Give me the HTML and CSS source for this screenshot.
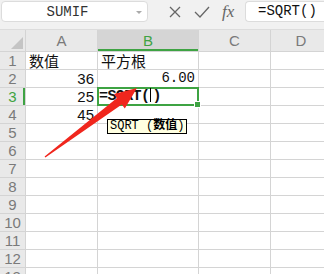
FILE: index.html
```html
<!DOCTYPE html>
<html lang="en">
<head>
    <meta charset="UTF-8">
    <title>SQRT</title>
    <link rel="stylesheet" href="styles.css">
</head>
<body>
    <div class="toolbar">
        <div class="name-box">
            <span class="name-text">SUMIF</span>
            <span class="drop"></span>
        </div>
        <div class="fx-icons">
            <svg width="14" height="14" viewBox="0 0 14 14"><path d="M2 2 L12 12 M12 2 L2 12" stroke="#666" stroke-width="1.3" fill="none"/></svg>
            <svg width="16" height="14" viewBox="0 0 16 14"><path d="M1 7 L6 12 L15 2" stroke="#666" stroke-width="1.3" fill="none"/></svg>
            <span class="fx">fx</span>
        </div>
        <div class="formula">=SQRT()</div>
    </div>

    <div class="sheet">
        <div class="corner"><span class="tri"></span></div>
        <div class="col-head">A</div>
        <div class="col-head active">B</div>
        <div class="col-head">C</div>
        <div class="col-head">D</div>

        <div class="row-head">1</div>
        <div class="cell cjk">数值</div>
        <div class="cell cjk">平方根</div>
        <div class="cell"></div>
        <div class="cell"></div>

        <div class="row-head">2</div>
        <div class="cell num">36</div>
        <div class="cell mono">6.00</div>
        <div class="cell"></div>
        <div class="cell"></div>

        <div class="row-head active">3</div>
        <div class="cell num">25</div>
        <div class="cell editing">=SQRT(<span class="caret"></span>)<span class="handle"></span>
            <div class="tip">SQRT (<b>数值</b>)</div>
        </div>
        <div class="cell"></div>
        <div class="cell"></div>

        <div class="row-head">4</div>
        <div class="cell num">45</div>
        <div class="cell"></div>
        <div class="cell"></div>
        <div class="cell"></div>

        <div class="row-head">5</div><div class="cell"></div><div class="cell"></div><div class="cell"></div><div class="cell"></div>
        <div class="row-head">6</div><div class="cell"></div><div class="cell"></div><div class="cell"></div><div class="cell"></div>
        <div class="row-head">7</div><div class="cell"></div><div class="cell"></div><div class="cell"></div><div class="cell"></div>
        <div class="row-head">8</div><div class="cell"></div><div class="cell"></div><div class="cell"></div><div class="cell"></div>
        <div class="row-head">9</div><div class="cell"></div><div class="cell"></div><div class="cell"></div><div class="cell"></div>
        <div class="row-head">10</div><div class="cell"></div><div class="cell"></div><div class="cell"></div><div class="cell"></div>
        <div class="row-head">11</div><div class="cell"></div><div class="cell"></div><div class="cell"></div><div class="cell"></div>
        <div class="row-head">12</div><div class="cell"></div><div class="cell"></div><div class="cell"></div><div class="cell"></div>
        <div class="row-head">13</div><div class="cell"></div><div class="cell"></div><div class="cell"></div><div class="cell"></div>
    </div>

    <!-- annotation arrow -->
    <svg class="arrow" width="324" height="274" viewBox="0 0 324 274">
        <polygon points="45.4,157.4 121.8,104.4 124.8,108.4 137,88 114,94 117,98 44.6,156.6" fill="#f0261d"/>
    </svg>
</body>
</html>
```

FILE: styles.css
```css
body {
    margin: 0;
    width: 324px;
    height: 274px;
    overflow: hidden;
    background: #ffffff;
    font-family: "Liberation Sans", Arial, sans-serif;
    position: relative;
}

.toolbar {
    height: 29px;
    background: #f1f1f1;
    display: flex;
    align-items: flex-start;
    padding-top: 1px;
    box-sizing: border-box;
}

.name-box {
    width: 147px;
    height: 21px;
    margin-left: 1px;
    background: #fff;
    border: 1px solid #dcdcdc;
    border-radius: 4px;
    box-sizing: border-box;
    display: flex;
    align-items: center;
    position: relative;
}

.name-text {
    flex: 1;
    text-align: center;
    font-family: "Liberation Mono", monospace;
    font-size: 14px;
    color: #333;
    padding-right: 14px;
}

.drop {
    position: absolute;
    right: 5px;
    top: 9px;
    border-left: 3px solid transparent;
    border-right: 3px solid transparent;
    border-top: 3px solid #aaa;
}

.fx-icons {
    width: 97px;
    height: 21px;
    display: flex;
    align-items: center;
    gap: 12px;
    padding-left: 20px;
    box-sizing: border-box;
}

.fx {
    font-family: "Liberation Serif", serif;
    font-style: italic;
    font-size: 17px;
    color: #666;
    line-height: 1;
}

.formula {
    flex: 1;
    height: 21px;
    background: #fff;
    border: 1px solid #dcdcdc;
    border-radius: 4px 0 0 4px;
    border-right: none;
    box-sizing: border-box;
    font-family: "Liberation Mono", monospace;
    font-size: 14px;
    line-height: 19px;
    padding-left: 12px;
    color: #111;
}

.sheet {
    display: grid;
    grid-template-columns: 25px 71px 100px 71px 60px;
    grid-template-rows: 21px repeat(13, 17px);
    gap: 1px;
    background: #d4d4d4;
    border-top: 1px solid #dcdcdc;
}

.corner,
.col-head,
.row-head {
    background: #e9e9e9;
    color: #7a7a7a;
    font-size: 15px;
}

.corner {
    position: relative;
}

.tri {
    position: absolute;
    right: 2px;
    bottom: 2px;
    border-left: 12px solid transparent;
    border-bottom: 12px solid #c4c4c4;
}

.col-head {
    display: flex;
    align-items: center;
    justify-content: center;
    color: #7a7a7a;
}

.col-head.active {
    background: #d5d5d5;
    color: #3ea343;
    box-shadow: inset 0 -2px #3ea343;
}

.row-head {
    display: flex;
    align-items: center;
    justify-content: center;
    line-height: 1;
}

.row-head.active {
    color: #3ea343;
    box-shadow: inset -2px 0 #3ea343;
}

.cell {
    background: #fff;
    font-size: 15px;
    line-height: 17px;
    color: #111;
    padding: 0 3px;
    white-space: nowrap;
}

.cjk {
    font-family: "Noto Sans CJK SC", sans-serif;
    font-size: 15px;
    line-height: 17px;
}

.num {
    text-align: right;
}

.mono {
    text-align: right;
    font-family: "Liberation Mono", monospace;
    font-size: 14px;
}

.editing {
    position: relative;
    font-family: "Liberation Mono", monospace;
    font-weight: bold;
    font-size: 15px;
    letter-spacing: -0.6px;
    padding-left: 1px;
    box-shadow: 0 0 0 1px #3ea343, inset 0 0 0 1px #3ea343;
    z-index: 1;
}

.caret {
    display: inline-block;
    width: 1px;
    height: 14px;
    background: #000;
    vertical-align: -2px;
    margin: 0 1px;
}

.handle {
    position: absolute;
    right: -3px;
    bottom: -3px;
    width: 5px;
    height: 5px;
    background: #3ea343;
    border: 1px solid #fff;
}

.tip {
    position: absolute;
    left: 9px;
    top: 31px;
    background: #ffffe1;
    border: 1px solid #000;
    font-family: "Liberation Mono", "Noto Sans CJK SC", monospace;
    font-weight: normal;
    font-size: 12px;
    line-height: 13px;
    letter-spacing: 0;
    padding: 0 2px;
    color: #000;
}

.arrow {
    position: absolute;
    left: 0;
    top: 0;
    z-index: 2;
    pointer-events: none;
}
```
